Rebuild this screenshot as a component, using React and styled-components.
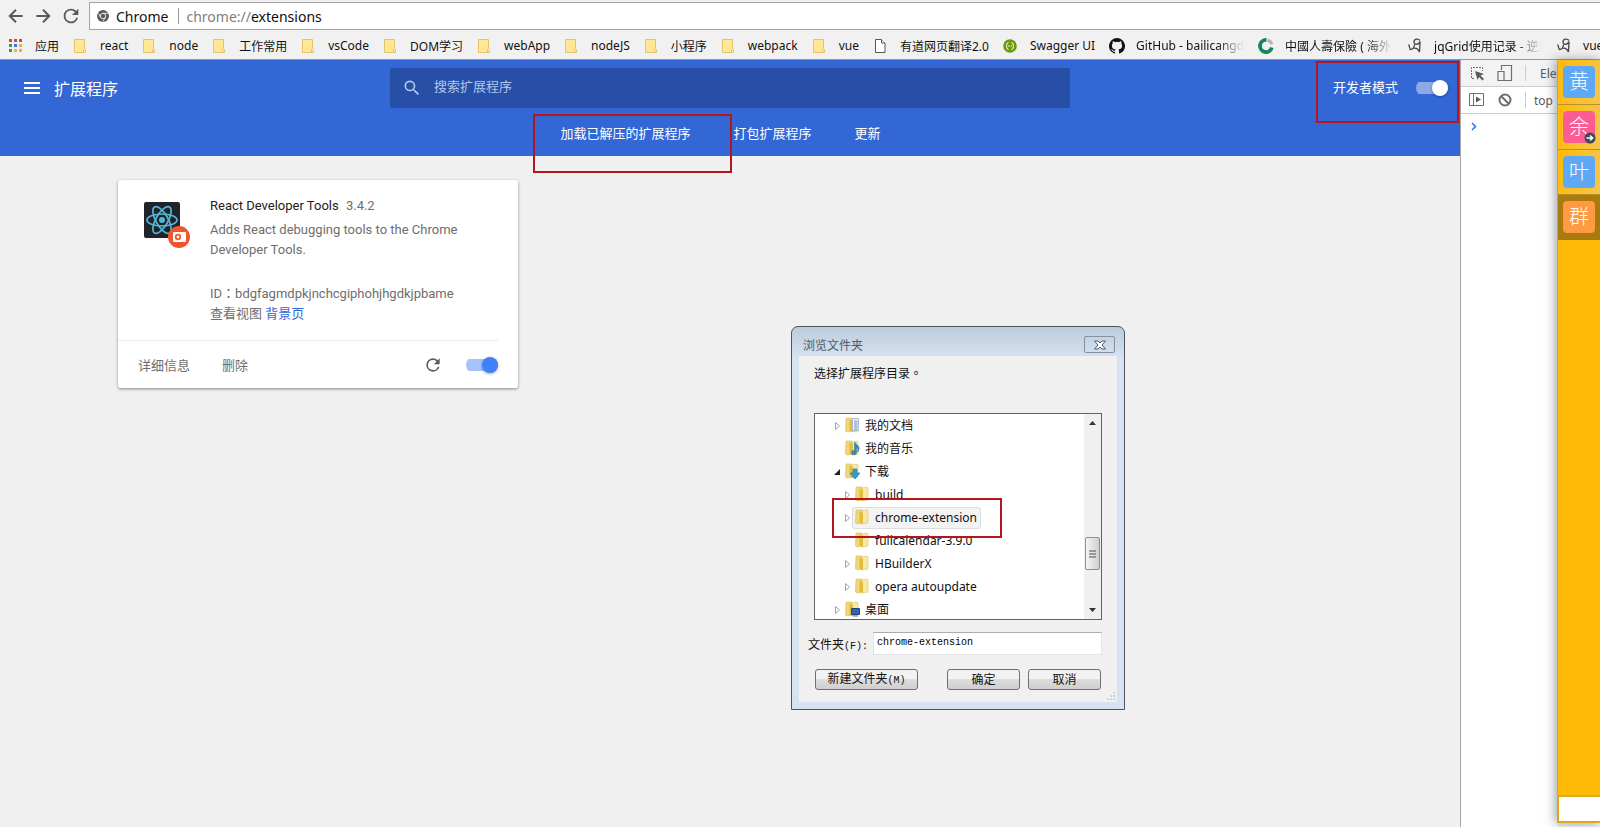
import styled, { createGlobalStyle } from "styled-components";

const GlobalStyle = createGlobalStyle`
  * {
    box-sizing: border-box;
  }
  body {
    margin: 0;
    overflow: hidden;
    font-family: "Noto Sans", "Noto Sans CJK SC", sans-serif;
    font-size: 12px;
    color: #111;
  }
  button, input {
    font-family: inherit;
    font-size: inherit;
  }
  button {
    padding: 0;
    border: none;
    background: none;
    color: inherit;
  }
`;

const bookmarks = [
  { icon: "folder", text: "react" },
  { icon: "folder", text: "node" },
  { icon: "folder", text: "工作常用" },
  { icon: "folder", text: "vsCode" },
  { icon: "folder", text: "DOM学习" },
  { icon: "folder", text: "webApp" },
  { icon: "folder", text: "nodeJS" },
  { icon: "folder", text: "小程序" },
  { icon: "folder", text: "webpack" },
  { icon: "folder", text: "vue" },
  { icon: "file", text: "有道网页翻译2.0" },
  { icon: "swagger", text: "Swagger UI" },
  { icon: "github", text: "GitHub - bailicangdu", fade: true },
  { icon: "insurance", text: "中國人壽保險 ( 海外 )", fade: true },
  { icon: "note", text: "jqGrid使用记录 - 逆风", fade: true },
  { icon: "note", text: "vue" },
];

const tree = [
  { text: "我的文档", kind: "docs", level: 0, arrow: "closed" },
  { text: "我的音乐", kind: "music", level: 0 },
  { text: "下载", kind: "download", level: 0, arrow: "open" },
  { text: "build", level: 1, arrow: "closed" },
  { text: "chrome-extension", level: 1, arrow: "closed", selected: true },
  { text: "fullcalendar-3.9.0", level: 1 },
  { text: "HBuilderX", level: 1, arrow: "closed" },
  { text: "opera autoupdate", level: 1, arrow: "closed" },
  { text: "桌面", kind: "desktop", level: 0, arrow: "closed" },
];

const contacts = [
  { text: "黄", color: "#5fa8f5" },
  { text: "余", color: "#fb5c94", badge: true },
  { text: "叶", color: "#5fa8f5" },
  { text: "群", color: "#ff9a44", active: true },
];

const ReloadIcon = ({ size = 20 }) => (
  <svg width={size} height={size} viewBox="0 0 24 24" fill="#5a5a5a">
    <path d="M17.65 6.35A7.96 7.96 0 0 0 12 4a8 8 0 1 0 7.73 10h-2.08A6 6 0 1 1 12 6c1.66 0 3.14.69 4.22 1.78L13 11h7V4z" />
  </svg>
);

const ArrowIcon = ({ forward }) => (
  <svg width="20" height="20" viewBox="0 0 24 24" fill="none" stroke="#5a5a5a" strokeWidth="2.4">
    {forward ? <path d="M4 12h15M12 4.500l7.500 7.500-7.500 7.500" /> : <path d="M20 12H5M12 4.500L4.500 12l7.500 7.500" />}
  </svg>
);

const ChromeIcon = () => (
  <svg width="12" height="12" viewBox="0 0 12 12">
    <circle cx="6" cy="6" r="6" fill="#5a5a5a" />
    <circle cx="6" cy="6" r="2.7" fill="none" stroke="#fff" strokeWidth="0.8" />
    <path d="M6 3.300h5.200M3.600 7.300L1.300 3.200M8.300 7.300L5.800 11.700" stroke="#fff" strokeWidth="0.8" />
  </svg>
);

const AppsIcon = () => {
  const colors = ["#d9453a", "#d9453a", "#d9453a", "#2f9e58", "#4273d8", "#e8b53c", "#2f9e58", "#e8b53c", "#e8b53c"];
  return (
    <svg width="16" height="16" viewBox="0 0 16 16">
      {colors.map((c, i) => (
        <rect key={i} x={1 + (i % 3) * 5} y={1 + Math.floor(i / 3) * 5} width="3" height="3" fill={c} />
      ))}
    </svg>
  );
};

const BookmarkIcon = ({ kind }) => {
  switch (kind) {
    case "folder":
      return (
        <svg width="16" height="16" viewBox="0 0 16 16">
          <path d="M1.500 1.500h10v9l1 1v3h-11z" fill="#ffe793" stroke="#e3c46c" />
          <path d="M10.500 11v3.500" stroke="#e3c46c" />
        </svg>
      );
    case "file":
      return (
        <svg width="16" height="16" viewBox="0 0 16 16" fill="#fff" stroke="#555">
          <path d="M2.500 1.500h6l3.500 3.500v9.500h-9.500z" />
          <path d="M8.500 1.500v3.500h3.500" />
        </svg>
      );
    case "swagger":
      return (
        <svg width="16" height="16" viewBox="0 0 16 16">
          <circle cx="7" cy="8" r="6.800" fill="#6a9a08" />
          <path d="M5.500 4.500q-1.500 0-1.500 1.500t-1 2q1 .500 1 2t1.500 1.500M8.500 4.500q1.500 0 1.500 1.500t1 2q-1 .500-1 2t-1.500 1.500" fill="none" stroke="#fff" />
          <path d="M5 8h4" stroke="#fff" strokeDasharray="1 .5" />
        </svg>
      );
    case "github":
      return (
        <svg width="16" height="16" viewBox="0 0 16 16" fill="#111">
          <path d="M8 0a8 8 0 0 0-2.530 15.590c.4.070.55-.170.55-.380v-1.490c-2.230.480-2.700-.940-2.700-.940-.360-.920-.890-1.170-.890-1.170-.730-.500.050-.490.050-.490.810.060 1.230.830 1.230.830.720 1.220 1.880.870 2.340.660.070-.520.280-.870.510-1.070-1.780-.200-3.640-.890-3.640-3.950 0-.870.310-1.590.820-2.150-.080-.200-.360-1.010.080-2.120 0 0 .670-.210 2.200.820a7.700 7.700 0 0 1 4 0c1.530-1.040 2.200-.820 2.200-.820.440 1.100.160 1.920.080 2.120.510.560.820 1.270.820 2.150 0 3.070-1.870 3.750-3.650 3.950.290.250.540.730.540 1.480v2.190c0 .210.150.460.550.380A8 8 0 0 0 8 0z" />
        </svg>
      );
    case "insurance":
      return (
        <svg width="16" height="16" viewBox="0 0 16 16" fill="none">
          <path d="M8.500 2a6 6 0 1 0 5.300 7.500" stroke="#14875a" strokeWidth="3.800" />
          <path d="M9.500 2.200a6 6 0 0 1 4.300 4.200" stroke="#c2aeb0" strokeWidth="3" />
        </svg>
      );
    default:
      return (
        <svg width="16" height="16" viewBox="0 0 16 16" fill="none" stroke="#444" strokeWidth="1.300">
          <path d="M1.500 6.500c1.500 1 .500 5 2.500 5s3.500-3 3.500-5" />
          <path d="M13 2.500C11 0 7 1 7 4s4.500 3.500 6-.500c0 4-.500 7-.5 10.500C11 11 9 9.500 6.500 10.500" />
        </svg>
      );
  }
};

const FolderIcon = ({ kind }) => (
  <svg width="16" height="16" viewBox="0 0 16 16">
    <path d="M2 1l6 0v13l-5 1-1.500-1z" fill="#efd777" stroke="#d9bd58" strokeWidth=".6" />
    <path d="M8 2l5-1 1 1v12l-6 1z" fill="#f8e9a0" stroke="#dcc266" strokeWidth=".6" />
    <path d="M5.500 2.500l3.500 1.500v11l-3.500-1z" fill="#e2bc3c" />
    {kind === "docs" && (
      <>
        <path d="M8.500 1.500h6v12h-6z" fill="#f4f7ff" stroke="#93a5c6" strokeWidth=".7" />
        <path d="M10 4h3.500M10 6h3.500M10 8h3.500M10 10h3.500M10 12h3.500" stroke="#6d88bd" />
      </>
    )}
    {kind === "music" && (
      <path d="M10.500 2v8.500a2.500 2.200 0 1 0 2 2V7q2.500 2 1 5 4-4.500-1.500-8z" fill="#2f8fc4" stroke="#226e9c" strokeWidth=".5" />
    )}
    {kind === "download" && <path d="M9 6h4v4h3l-5 6-5-6h3z" fill="#2b9bd6" stroke="#1b78b0" strokeWidth=".6" />}
    {kind === "desktop" && (
      <>
        <path d="M7.500 7.500h8v6h-8z" fill="#2f66ad" stroke="#1d4379" />
        <path d="M9 15h5" stroke="#777" />
      </>
    )}
  </svg>
);

const TreeArrow = ({ state }) => (
  <svg width="8" height="10" viewBox="0 0 8 10">
    {state === "closed" && <path d="M2.500 1.500l4 3.500-4 3.500z" fill="#fff" stroke="#9a9a9a" strokeWidth=".9" />}
    {state === "open" && <path d="M7 2v6H1z" fill="#222" />}
  </svg>
);

const ReactLogo = () => (
  <svg width="46" height="46" viewBox="0 0 46 46">
    <rect width="36" height="36" rx="2" fill="#20232a" />
    <g fill="none" stroke="#52b8d8" strokeWidth="1.700">
      <ellipse cx="18" cy="18" rx="15" ry="6" />
      <ellipse cx="18" cy="18" rx="15" ry="6" transform="rotate(60 18 18)" />
      <ellipse cx="18" cy="18" rx="15" ry="6" transform="rotate(120 18 18)" />
    </g>
    <circle cx="18" cy="18" r="3" fill="#52b8d8" />
    <circle cx="35" cy="35" r="11" fill="#f0562c" />
    <rect x="29" y="30" width="13" height="10" rx="1" fill="#fff" />
    <circle cx="34" cy="35" r="2.300" fill="none" stroke="#f0562c" strokeWidth="1.700" />
  </svg>
);

const Toggle = ({ label, light }) => <ToggleInput type="checkbox" aria-label={label} defaultChecked $light={light} />;

const BrowserBar = () => (
  <>
    <AddressRow>
      <IconButton aria-label="后退"><ArrowIcon /></IconButton>
      <IconButton aria-label="前进"><ArrowIcon forward /></IconButton>
      <IconButton aria-label="重新加载"><ReloadIcon size={22} /></IconButton>
      <AddressBox>
        <ChromeIcon />
        <span>Chrome</span>
        <Divider />
        <span><Muted>chrome://</Muted>extensions</span>
      </AddressBox>
    </AddressRow>
    <BookmarkRow>
      <Bookmark href="#"><AppsIcon /><span>应用</span></Bookmark>
      {bookmarks.map((b, i) => (
        <Bookmark href="#" key={i}>
          <BookmarkIcon kind={b.icon} />
          <BookmarkText $fade={b.fade}>{b.text}</BookmarkText>
        </Bookmark>
      ))}
    </BookmarkRow>
  </>
);

const ExtensionCard = () => (
  <Card>
    <CardMain>
      <ReactLogo />
      <div>
        <CardTitle>React Developer Tools <Version>3.4.2</Version></CardTitle>
        <Description>Adds React debugging tools to the Chrome Developer Tools.</Description>
        <Details>
          <div>ID<Punctuation>：</Punctuation>bdgfagmdpkjnchcgiphohjhgdkjpbame</div>
          <div>查看视图 <ViewLink href="#">背景页</ViewLink></div>
        </Details>
      </div>
    </CardMain>
    <CardFooter>
      <button>详细信息</button>
      <button>删除</button>
      <Spacer />
      <IconButton aria-label="重新加载"><ReloadIcon size={20} /></IconButton>
      <Toggle label="启用" />
    </CardFooter>
  </Card>
);

const BrowseDialog = () => (
  <Dialog role="dialog" aria-label="浏览文件夹">
    <DialogTitle>
      <span>浏览文件夹</span>
      <CloseButton aria-label="关闭">
        <svg width="14" height="10" viewBox="0 0 14 10">
          <path d="M1.500 1h3.500l2 2 2-2h3.500l-3.500 4 3.500 4h-3.500l-2-2-2 2h-3.500l3.500-4z" fill="#fff" stroke="#4e5a68" />
        </svg>
      </CloseButton>
    </DialogTitle>
    <DialogBody>
      <Message>选择扩展程序目录<Punctuation>。</Punctuation></Message>
      <TreeBox>
        <TreeList>
          {tree.map((t) => (
            <TreeRow key={t.text} $level={t.level}>
              <TreeArrow state={t.arrow} />
              <TreeLabel $selected={t.selected}><FolderIcon kind={t.kind} />{t.text}</TreeLabel>
            </TreeRow>
          ))}
        </TreeList>
        <ScrollTrack>
          <svg width="7" height="4" viewBox="0 0 7 4"><path d="M0 4l3.500-4L7 4z" fill="#333" /></svg>
          <ScrollThumb>
            <svg width="8" height="8" viewBox="0 0 8 8"><path d="M0 1h7M0 4h7M0 7h7" stroke="#555" /></svg>
          </ScrollThumb>
          <svg width="7" height="4" viewBox="0 0 7 4"><path d="M0 0h7L3.500 4z" fill="#333" /></svg>
        </ScrollTrack>
      </TreeBox>
      <Field>
        <label htmlFor="folder">文件夹<Mono>(F):</Mono></label>
        <FolderInput id="folder" defaultValue="chrome-extension" />
      </Field>
      <Actions>
        <WideButton>新建文件夹<Mono>(M)</Mono></WideButton>
        <Spacer />
        <WinButton>确定</WinButton>
        <WinButton>取消</WinButton>
      </Actions>
      <ResizeGrip viewBox="0 0 10 10">
        <path d="M8 0h2v2h-2zM8 4h2v2h-2zM8 8h2v2h-2zM4 4h2v2h-2zM4 8h2v2h-2zM0 8h2v2h-2z" fill="#c4c4c4" />
      </ResizeGrip>
    </DialogBody>
  </Dialog>
);

const Devtools = () => (
  <DevPanel>
    <DevRow $tinted>
      <svg width="16" height="16" viewBox="0 0 16 16">
        <path d="M5 13.500H2.500v-11h11V6" fill="none" stroke="#6e6e6e" strokeDasharray="2 1" />
        <path d="M6 6l9 3-3.500 1.500 3.500 3.500-1.500 1.500L10 12l-1.500 3z" fill="#5a5a5a" />
      </svg>
      <svg width="16" height="18" viewBox="0 0 16 18" fill="none" stroke="#6e6e6e" strokeWidth="1.200">
        <path d="M4.500 6V1.500h10v15H7M1 7.500h6v9H1z" />
      </svg>
      <DevDivider />
      <DevTab>Elements</DevTab>
    </DevRow>
    <DevRow>
      <svg width="16" height="14" viewBox="0 0 16 14">
        <path d="M.500 .500h14v12H.500zM4.500 .500v12" fill="none" stroke="#6e6e6e" />
        <path d="M7 3.500l5 3-5 3z" fill="#5a5a5a" />
      </svg>
      <svg width="16" height="16" viewBox="0 0 16 16" fill="none" stroke="#6e6e6e" strokeWidth="2">
        <circle cx="8" cy="8" r="5.500" />
        <path d="M4 4l8 8" />
      </svg>
      <DevDivider />
      <DevText>top</DevText>
    </DevRow>
    <Prompt>
      <svg width="6" height="9" viewBox="0 0 6 9"><path d="M1 1l3.500 3.500L1 8" fill="none" stroke="#367cf1" strokeWidth="1.700" /></svg>
    </Prompt>
  </DevPanel>
);

const App = () => (
  <Window>
    <GlobalStyle />
    <BrowserBar />
    <Content>
      <Page>
        <Header>
          <HeaderTop>
            <MenuTitle>
              <IconButton aria-label="主菜单">
                <svg width="16" height="12" viewBox="0 0 16 12"><path d="M0 1h16M0 6h16M0 11h16" stroke="#fff" strokeWidth="2" /></svg>
              </IconButton>
              <h1>扩展程序</h1>
            </MenuTitle>
            <SearchBox>
              <svg width="20" height="20" viewBox="0 0 24 24" fill="#b4c5ea">
                <path d="M15.500 14h-.790l-.280-.270A6.500 6.500 0 1 0 13.730 14.430l.270.280v.790l5 4.990L20.490 19zM9.500 14a4.500 4.500 0 1 1 0-9 4.500 4.500 0 0 1 0 9z" />
              </svg>
              <input type="search" aria-label="搜索扩展程序" placeholder="搜索扩展程序" />
            </SearchBox>
            <DevMode>
              <span>开发者模式</span>
              <Toggle light label="开发者模式" />
            </DevMode>
          </HeaderTop>
          <DevActions>
            <button>加载已解压的扩展程序</button>
            <button>打包扩展程序</button>
            <button>更新</button>
          </DevActions>
        </Header>
        <CardGrid>
          <ExtensionCard />
        </CardGrid>
      </Page>
      <Devtools />
      <Messenger>
        {contacts.map((c) => (
          <Contact key={c.text} $active={c.active}>
            <Avatar $color={c.color}>{c.text}</Avatar>
            {c.badge && (
              <Badge viewBox="0 0 12 12">
                <circle cx="6" cy="6" r="5.500" fill="#3d4a52" />
                <path d="M2.500 6h6M6 3.500L8.700 6 6 8.500" fill="none" stroke="#fff" strokeWidth="1.500" />
              </Badge>
            )}
          </Contact>
        ))}
        <MessengerFoot />
      </Messenger>
    </Content>
    <BrowseDialog />
    <Highlight $left={533} $top={114} $width={199} $height={59} />
    <Highlight $left={1316} $top={61} $width={143} $height={62} />
    <Highlight $left={832} $top={498} $width={170} $height={40} />
  </Window>
);

export default App;

const Window = styled.div`
  position: relative;
  display: flex;
  flex-direction: column;
  min-height: 100vh;
  background: #f1f1f1;
  overflow: hidden;
`;

const Spacer = styled.div`
  flex: 1;
`;

const Punctuation = styled.span`
  font-family: "Noto Sans CJK TC", sans-serif;
`;

const IconButton = styled.button`
  display: flex;
  align-items: center;
  justify-content: center;
`;

const AddressRow = styled.div`
  display: flex;
  align-items: center;
  gap: 7px;
  height: 32px;
  padding-left: 6px;
`;

const AddressBox = styled.div`
  flex: 1;
  display: flex;
  align-items: center;
  height: 28px;
  padding-left: 7px;
  background: #fff;
  border: 1px solid #a6a6a6;
  border-right: none;
  font-size: 14px;

  span {
    margin-left: 7px;
  }
`;

const Divider = styled.i`
  width: 1px;
  height: 16px;
  margin-left: 10px;
  background: #999;
`;

const Muted = styled.em`
  font-style: normal;
  color: #808080;
`;

const BookmarkRow = styled.nav`
  display: flex;
  align-items: center;
  gap: 14px;
  height: 28px;
  padding-left: 8px;
  border-bottom: 1px solid #999;
  overflow: hidden;
`;

const Bookmark = styled.a`
  flex: none;
  display: flex;
  align-items: center;
  gap: 11px;
  color: #111;
  text-decoration: none;
  white-space: nowrap;
`;

const BookmarkText = styled.span`
  ${(p) =>
    p.$fade &&
    `
    width: 108px;
    overflow: hidden;
    mask-image: linear-gradient(to right, #000 75%, transparent);
  `}
`;

const Content = styled.div`
  flex: 1;
  display: flex;
`;

const Page = styled.main`
  flex: 1;
  background: #f0f0f0;
  font-family: Roboto, "Noto Sans CJK SC", sans-serif;
  font-size: 13px;
`;

const Header = styled.header`
  background: #3367d6;
  color: #fff;
`;

const HeaderTop = styled.div`
  display: grid;
  grid-template-columns: 1fr 680px 1fr;
  align-items: center;
  height: 56px;
`;

const MenuTitle = styled.div`
  display: flex;
  align-items: center;
  gap: 14px;
  padding-left: 24px;

  h1 {
    margin: 0;
    font-size: 16px;
    font-weight: 400;
  }
`;

const SearchBox = styled.div`
  display: flex;
  align-items: center;
  gap: 12px;
  height: 40px;
  padding: 0 12px;
  border-radius: 2px;
  background: #274fa5;

  input {
    flex: 1;
    padding: 0 0 3px;
    border: none;
    outline: none;
    background: none;
    color: #fff;
  }
  input::placeholder {
    color: #b4c5ea;
  }
`;

const DevMode = styled.label`
  display: flex;
  align-items: center;
  justify-content: flex-end;
  gap: 18px;
  padding-right: 12px;

  span {
    padding-bottom: 3px;
  }
`;

const ToggleInput = styled.input`
  appearance: none;
  display: flex;
  align-items: center;
  justify-content: flex-end;
  width: 32px;
  height: 16px;
  margin: 0;
  background: linear-gradient(${(p) => (p.$light ? "#8fa9e8, #8fa9e8" : "#a6c3fa, #a6c3fa")}) center / 32px 12px no-repeat;
  border-radius: 8px;

  &::before {
    content: "";
    width: 16px;
    height: 16px;
    border-radius: 50%;
    background: ${(p) => (p.$light ? "#fff" : "#4080f8")};
    box-shadow: 0 1px 3px rgba(0, 0, 0, 0.35);
  }
`;

const DevActions = styled.div`
  display: flex;
  justify-content: center;
  height: 40px;
  padding-bottom: 8px;

  button {
    margin-right: 19px;
    padding: 0 12px;
  }
`;

const CardGrid = styled.div`
  display: grid;
  grid-template-columns: repeat(auto-fill, 400px);
  gap: 12px;
  justify-content: center;
  padding: 24px 60px;
`;

const Card = styled.section`
  background: #fff;
  border-radius: 2px;
  box-shadow: 0 1px 3px rgba(0, 0, 0, 0.45);
  color: #6e6e6e;
`;

const CardMain = styled.div`
  display: flex;
  gap: 20px;
  height: 161px;
  margin-right: 20px;
  padding: 16px 20px 0 26px;
  border-bottom: 1px solid #eaeaea;
  line-height: 20px;

  svg {
    flex: none;
    margin-top: 6px;
  }
`;

const CardTitle = styled.div`
  color: #222;
`;

const Version = styled.span`
  margin-left: 4px;
  color: #6e6e6e;
`;

const Description = styled.div`
  margin-top: 4px;
`;

const Details = styled.div`
  margin-top: 23px;
`;

const ViewLink = styled.a`
  color: #3367d6;
  text-decoration: none;
`;

const CardFooter = styled.div`
  display: flex;
  align-items: center;
  height: 47px;
  padding: 0 20px;

  button + button {
    margin-left: 32px;
  }
  ${ToggleInput} {
    margin-left: 23px;
  }
`;

const DevPanel = styled.aside`
  width: 97px;
  overflow: hidden;
  background: #fff;
  border-left: 1px solid #a3a3a3;
  color: #5a5a5a;
`;

const DevRow = styled.div`
  display: flex;
  align-items: center;
  gap: 12px;
  height: 27px;
  padding-left: 8px;
  border-bottom: 1px solid #ccc;
  background: ${(p) => (p.$tinted ? "#f3f3f3" : "#fff")};

  svg {
    flex: none;
  }
`;

const DevDivider = styled.i`
  flex: none;
  width: 1px;
  height: 16px;
  background: #ccc;
`;

const DevTab = styled.span`
  min-width: 0;
  padding-left: 2px;
  overflow: hidden;
`;

const DevText = styled.span`
  margin-left: -4px;
`;

const Prompt = styled.div`
  padding: 4px 10px;
`;

const Messenger = styled.aside`
  position: relative;
  display: flex;
  flex-direction: column;
  width: 43px;
  margin-bottom: 4px;
  background: #ffba08;
  border-left: 1px solid #d9a520;
  box-shadow: -2px 0 10px rgba(60, 70, 90, 0.5);
`;

const Contact = styled.button`
  position: relative;
  display: flex;
  align-items: center;
  justify-content: center;
  height: 45px;
  padding-bottom: 1px;
  background: ${(p) => (p.$active ? "#a87b0c" : "linear-gradient(100deg, #ffba08, #f7c54a)")};
  border-bottom: 1px solid ${(p) => (p.$active ? "#a87b0c" : "#b98f2c")};
`;

const Avatar = styled.span`
  width: 32px;
  height: 32px;
  border-radius: 4px;
  background: ${(p) => p.$color};
  color: #fff;
  font: 300 20px/30px "Noto Sans CJK SC", sans-serif;
`;

const Badge = styled.svg`
  position: absolute;
  right: 4px;
  bottom: 5px;
  width: 12px;
  height: 12px;
`;

const MessengerFoot = styled.div`
  height: 28px;
  margin-top: auto;
  background: #fff;
  border: 2px solid #e3a81a;
  border-left-width: 1px;
  border-right: none;
`;

const Dialog = styled.section`
  position: absolute;
  left: 791px;
  top: 326px;
  width: 334px;
  padding: 0 7px 7px;
  border: 1px solid #4d545c;
  border-radius: 7px 7px 0 0;
  background: linear-gradient(#bccbdc, #d7e3f1 32px);
`;

const DialogTitle = styled.div`
  display: flex;
  align-items: center;
  justify-content: space-between;
  height: 29px;
  padding: 6px 2px 0 4px;
  color: #4e5a68;
`;

const CloseButton = styled.button`
  display: flex;
  align-items: center;
  justify-content: center;
  width: 31px;
  height: 17px;
  border: 1px solid #8391a3;
  border-radius: 2px;
`;

const DialogBody = styled.div`
  position: relative;
  padding: 7px 15px 12px;
  background: #f0f0f0;
`;

const Message = styled.div`
  height: 50px;
  line-height: 20px;
`;

const TreeBox = styled.div`
  display: flex;
  height: 207px;
  border: 1px solid #5f6368;
  background: #fff;
`;

const TreeList = styled.ul`
  flex: 1;
  margin: 0;
  padding: 0;
  overflow: hidden;
  list-style: none;
`;

const TreeRow = styled.li`
  display: flex;
  align-items: center;
  gap: 1px;
  height: 23px;
  padding-left: ${(p) => 18 + p.$level * 10}px;
`;

const TreeLabel = styled.span`
  display: flex;
  align-items: center;
  gap: 5px;
  height: 22px;
  padding: 0 3px 1px 1px;
  border: 1px solid ${(p) => (p.$selected ? "#dcdcdc" : "transparent")};
  border-radius: 3px;
  background: ${(p) => (p.$selected ? "#f3f3f3" : "none")};
`;

const ScrollTrack = styled.div`
  display: flex;
  flex-direction: column;
  align-items: center;
  width: 17px;
  padding: 7px 0;
  background: #f0f0f0;
`;

const ScrollThumb = styled.div`
  display: flex;
  align-items: center;
  justify-content: center;
  width: 15px;
  height: 33px;
  margin: 112px 0 auto;
  border: 1px solid #8f8f8f;
  border-radius: 2px;
  background: linear-gradient(to right, #f5f5f5, #cfcfcf);
`;

const Mono = styled.span`
  font-family: "Liberation Mono", monospace;
  font-size: 10px;
`;

const Field = styled.div`
  display: flex;
  align-items: center;
  justify-content: space-between;
  margin: 12px 0 14px -6px;
`;

const FolderInput = styled.input`
  width: 229px;
  height: 23px;
  padding: 0 3px 3px;
  border: 1px solid #e3e3e3;
  border-top-color: #abadb3;
  background: #fff;
  font-family: "Liberation Mono", monospace;
  font-size: 10px;
`;

const Actions = styled.div`
  display: flex;
  gap: 8px;
  padding: 0 1px;
`;

const WinButton = styled.button`
  width: 73px;
  height: 21px;
  border: 1px solid #707070;
  border-radius: 3px;
  background: linear-gradient(#f2f2f2 50%, #dddddd 50%, #cfcfcf);
  line-height: 18px;
`;

const WideButton = styled(WinButton)`
  width: 103px;
`;

const ResizeGrip = styled.svg`
  position: absolute;
  right: 2px;
  bottom: 2px;
  width: 8px;
  height: 8px;
`;

const Highlight = styled.div`
  position: absolute;
  left: ${(p) => p.$left}px;
  top: ${(p) => p.$top}px;
  width: ${(p) => p.$width}px;
  height: ${(p) => p.$height}px;
  border: 2px solid #b4161e;
  pointer-events: none;
`;
